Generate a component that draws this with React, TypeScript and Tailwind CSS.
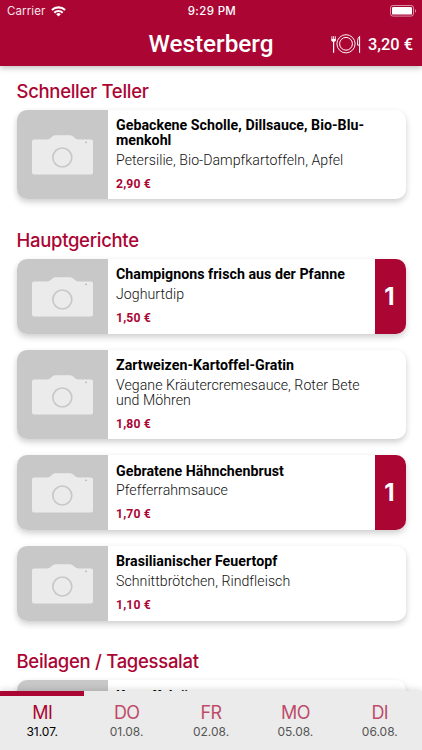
import React from 'react';
import clsx from 'clsx';

type Meal = {
  title: string[];
  sides: string[];
  price: string;
  count?: number;
};

type Category = {
  name: string;
  meals: Meal[];
};

const categories: Category[] = [
  {
    name: 'Schneller Teller',
    meals: [
      {
        title: ['Gebackene Scholle, Dillsauce, Bio-Blu-', 'menkohl'],
        sides: ['Petersilie, Bio-Dampfkartoffeln, Apfel'],
        price: '2,90 €',
      },
    ],
  },
  {
    name: 'Hauptgerichte',
    meals: [
      { title: ['Champignons frisch aus der Pfanne'], sides: ['Joghurtdip'], price: '1,50 €', count: 1 },
      {
        title: ['Zartweizen-Kartoffel-Gratin'],
        sides: ['Vegane Kräutercremesauce, Roter Bete', 'und Möhren'],
        price: '1,80 €',
      },
      { title: ['Gebratene Hähnchenbrust'], sides: ['Pfefferrahmsauce'], price: '1,70 €', count: 1 },
      { title: ['Brasilianischer Feuertopf'], sides: ['Schnittbrötchen, Rindfleisch'], price: '1,10 €' },
    ],
  },
  {
    name: 'Beilagen / Tagessalat',
    meals: [{ title: ['Kartoffelpüree'], sides: [], price: '' }],
  },
];

const days = [
  { day: 'MI', date: '31.07.' },
  { day: 'DO', date: '01.08.' },
  { day: 'FR', date: '02.08.' },
  { day: 'MO', date: '05.08.' },
  { day: 'DI', date: '06.08.' },
];

const WifiIcon = () => (
  <svg width="15" height="11" viewBox="0 0 15 11" fill="none" stroke="white" strokeWidth="2.1">
    <path d="M0.9 4.1a9.4 9.4 0 0 1 13.2 0" />
    <path d="M3.3 6.7a6 6 0 0 1 8.4 0" />
    <path d="M7.5 10.6 5.2 8.2a3.3 3.3 0 0 1 4.6 0Z" fill="white" stroke="none" />
  </svg>
);

const BatteryIcon = () => (
  <svg width="27" height="12" viewBox="0 0 27 12" fill="none">
    <rect x="0.5" y="0.5" width="23" height="10.6" rx="2.4" stroke="white" strokeOpacity="0.55" />
    <rect x="2" y="2" width="20" height="7.6" rx="1.2" fill="white" />
    <path d="M25 4v3.8c1.4-.6 1.4-3.2 0-3.8Z" fill="white" fillOpacity="0.55" />
  </svg>
);

const PlateIcon = () => (
  <svg width="30" height="20" viewBox="0 0 30 20" fill="none" stroke="white">
    <circle cx="15" cy="9.8" r="9.1" strokeWidth="0.95" />
    <circle cx="15" cy="9.8" r="6.4" strokeWidth="1" />
    <path d="M0.9 2.2v4.5M2.6 2.2v4.5M4.3 2.2v4.5" strokeWidth="0.9" />
    <path d="M0.5 5h4.2v1.6c0 .8-.8 1.4-2.1 1.4S.5 7.4.5 6.6Z" fill="white" stroke="none" />
    <path d="M2.6 7.5v11.3" strokeWidth="1.2" />
    <path d="M28.6 18.8V2.4c-1.4.7-2 3.3-2 5.8v2.9h2" strokeWidth="1" />
  </svg>
);

const CameraIcon = () => (
  <svg width="61" height="40" viewBox="0 0 61 40" fill="none">
    <path
      d="M2 4.5H14.5c2 0 3.5-.8 5-2.2C21 .8 22.3.3 24 .3h13.5c1.7 0 3 .5 4.500 2 1.500 1.400 3 2.200 5 2.200H59a2 2 0 0 1 2 2V37.600a2 2 0 0 1-2 2H2a2 2 0 0 1-2-2V6.500a2 2 0 0 1 2-2Z"
      fill="#ebebeb"
    />
    <circle cx="30.3" cy="22.5" r="9.5" stroke="#c8c8c8" strokeWidth="1.7" />
    <circle cx="54" cy="7.3" r="0.9" fill="#b4b4b4" />
  </svg>
);

const Header = () => (
  <header className="relative z-10 h-[66px] shrink-0 bg-[#ab0534] text-white shadow-[0_2px_6px_rgba(0,0,0,0.25)]">
    <div className="grid h-[22px] grid-cols-3 items-center pr-[5px] pl-[7px] font-[Inter,sans-serif] text-[11.5px]">
      <div className="flex items-center gap-[6px]">
        <span className="pt-px tracking-[0.1px] opacity-90">Carrier</span>
        <WifiIcon />
      </div>
      <span className="pt-px text-center font-medium tracking-[0.35px]">9:29 PM</span>
      <div className="flex justify-end">
        <BatteryIcon />
      </div>
    </div>
    <div className="grid h-[44px] grid-cols-[1fr_auto_1fr] items-center pr-[9px] pl-[9px]">
      <span />
      <h1 className="text-[24.3px] leading-[44px] font-medium">Westerberg</h1>
      <div className="flex items-center justify-end gap-[7px]">
        <PlateIcon />
        <span className="pt-[2px] text-[16.4px] font-medium">3,20 €</span>
      </div>
    </div>
  </header>
);

const MealCard = ({ meal }: { meal: Meal }) => (
  <article className="flex min-h-[74.5px] overflow-hidden rounded-[10px] bg-white shadow-[0_3px_6px_rgba(0,0,0,0.2)]">
    <div className="flex w-[91px] shrink-0 items-center justify-center bg-[#c8c8c8] pt-px">
      <CameraIcon />
    </div>
    <div className="flex-1 pt-[8.2px] pb-[7.8px] pl-[8.5px] whitespace-nowrap">
      <h3 className="text-[14.2px] leading-[15px] font-bold tracking-[0.03px] text-black">
        {meal.title.map((line) => (
          <span key={line} className="block">{line}</span>
        ))}
      </h3>
      <p className="mt-[4.5px] text-[14.15px] leading-[15px] font-light tracking-[0.04px] text-[#111]">
        {meal.sides.map((line) => (
          <span key={line} className="block">{line}</span>
        ))}
      </p>
      <p className="mt-[9px] text-[12.2px] leading-[15px] font-bold tracking-[0.15px] text-[#ab0534]">{meal.price}</p>
    </div>
    {meal.count && (
      <div className="flex w-[31px] shrink-0 items-center justify-center bg-[#ab0534] pr-px font-[Inter,sans-serif] text-[24px] font-bold text-white">
        {meal.count}
      </div>
    )}
  </article>
);

const DayTabs = () => (
  <nav className="relative z-10 grid h-[59px] shrink-0 grid-cols-5 bg-[#ebebeb] shadow-[0_-2px_6px_rgba(0,0,0,0.12)]">
    {days.map(({ day, date }, i) => (
      <button
        key={day}
        className={clsx(
          'flex flex-col items-center border-t-[5px] pt-[4px] font-[Inter,sans-serif]',
          i === 0 ? 'border-[#ab0534]' : 'border-transparent'
        )}
      >
        <span
          className={clsx(
            'text-[18px] leading-[25px] font-normal tracking-[-0.7px] text-[#ab0534]',
            i > 0 && 'opacity-70'
          )}
        >
          {day}
        </span>
        <span className={clsx('text-[12px] leading-[13px]', i === 0 ? 'text-black' : 'text-[#555]')}>{date}</span>
      </button>
    ))}
  </nav>
);

export default function App() {
  return (
    <div className="flex h-[750px] w-[422px] flex-col overflow-hidden bg-white font-[Roboto,sans-serif]">
      <Header />
      <main className="min-h-0 flex-1 overflow-hidden pt-[11px] pr-[16.5px] pl-[16.5px]">
        {categories.map((category) => (
          <section key={category.name} className="mb-[26.8px]">
            <h2 className="mb-[5px] font-[Inter,sans-serif] text-[18.5px] leading-[28px] font-[550] tracking-[-0.3px] text-[#ab0534]">
              {category.name}
            </h2>
            <div className="flex flex-col gap-[16.1px]">
              {category.meals.map((meal) => (
                <MealCard key={meal.title[0]} meal={meal} />
              ))}
            </div>
          </section>
        ))}
      </main>
      <DayTabs />
    </div>
  );
}
